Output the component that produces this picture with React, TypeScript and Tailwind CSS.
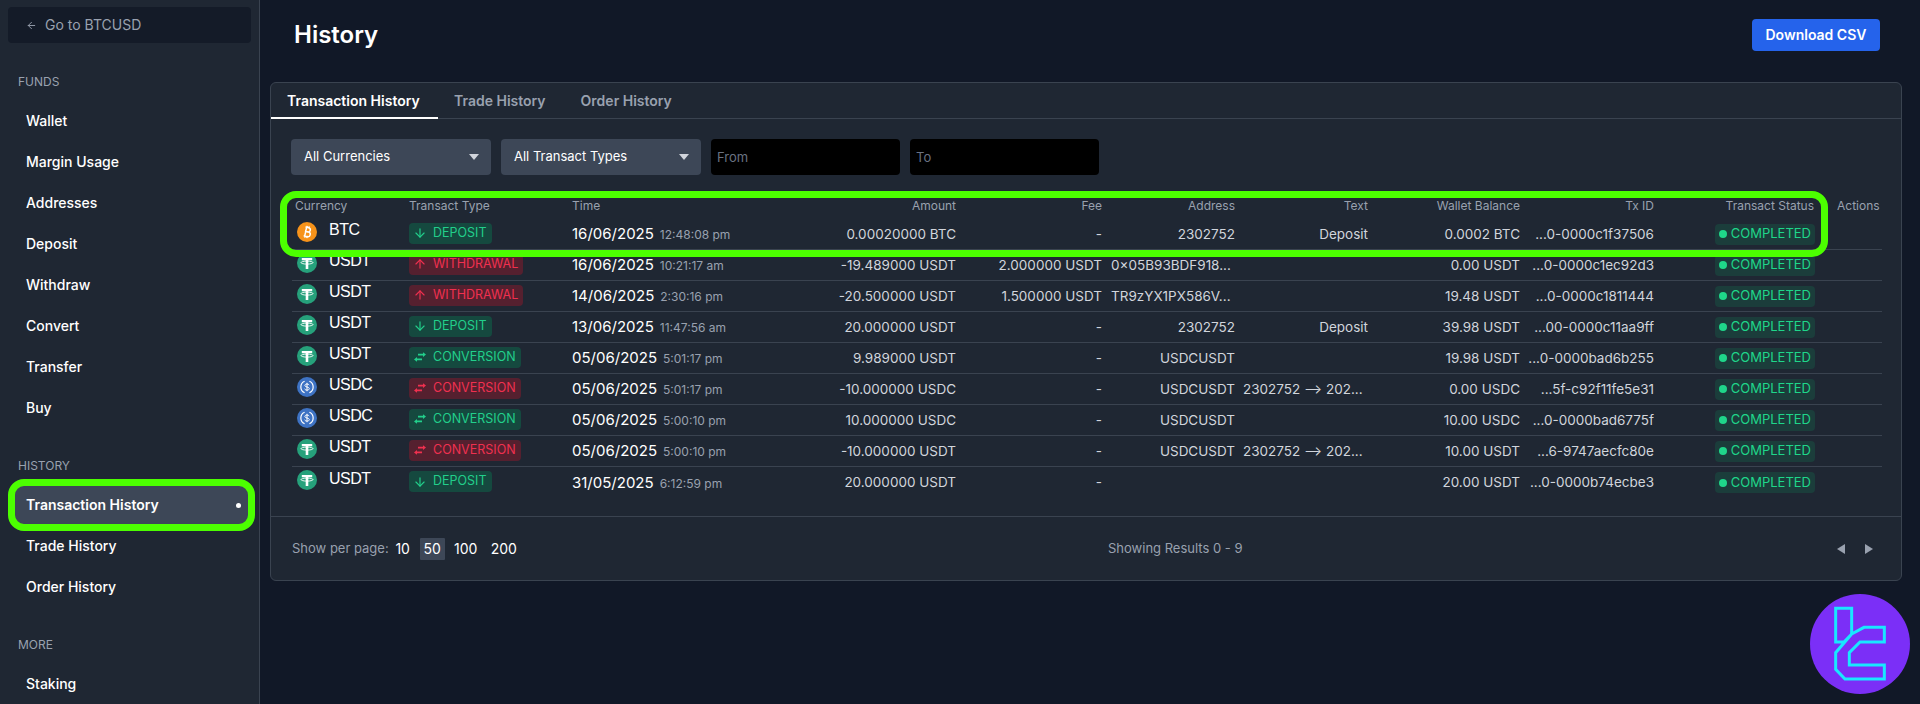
import { ArrowDown, ArrowLeft, ArrowUp } from 'lucide-react';

type Kind = 'DEPOSIT' | 'WITHDRAWAL' | 'CONVERSION';
type Coin = 'BTC' | 'USDT' | 'USDC';

type Row = {
  coin: Coin;
  kind: Kind;
  good: boolean;
  date: string;
  time: string;
  amount: string;
  fee: string;
  address: string;
  text: string;
  balance: string;
  txId: string;
};

const rows: Row[] = [
  { coin: 'BTC', kind: 'DEPOSIT', good: true, date: '16/06/2025', time: '12:48:08 pm', amount: '0.00020000 BTC', fee: '-', address: '2302752', text: 'Deposit', balance: '0.0002 BTC', txId: '...0-0000c1f37506' },
  { coin: 'USDT', kind: 'WITHDRAWAL', good: false, date: '16/06/2025', time: '10:21:17 am', amount: '-19.489000 USDT', fee: '2.000000 USDT', address: '0×05B93BDF918...', text: '', balance: '0.00 USDT', txId: '...0-0000c1ec92d3' },
  { coin: 'USDT', kind: 'WITHDRAWAL', good: false, date: '14/06/2025', time: '2:30:16 pm', amount: '-20.500000 USDT', fee: '1.500000 USDT', address: 'TR9zYX1PX586V...', text: '', balance: '19.48 USDT', txId: '...0-0000c1811444' },
  { coin: 'USDT', kind: 'DEPOSIT', good: true, date: '13/06/2025', time: '11:47:56 am', amount: '20.000000 USDT', fee: '-', address: '2302752', text: 'Deposit', balance: '39.98 USDT', txId: '...00-0000c11aa9ff' },
  { coin: 'USDT', kind: 'CONVERSION', good: true, date: '05/06/2025', time: '5:01:17 pm', amount: '9.989000 USDT', fee: '-', address: 'USDCUSDT', text: '', balance: '19.98 USDT', txId: '...0-0000bad6b255' },
  { coin: 'USDC', kind: 'CONVERSION', good: false, date: '05/06/2025', time: '5:01:17 pm', amount: '-10.000000 USDC', fee: '-', address: 'USDCUSDT', text: '2302752 ⟶ 202...', balance: '0.00 USDC', txId: '...5f-c92f11fe5e31' },
  { coin: 'USDC', kind: 'CONVERSION', good: true, date: '05/06/2025', time: '5:00:10 pm', amount: '10.000000 USDC', fee: '-', address: 'USDCUSDT', text: '', balance: '10.00 USDC', txId: '...0-0000bad6775f' },
  { coin: 'USDT', kind: 'CONVERSION', good: false, date: '05/06/2025', time: '5:00:10 pm', amount: '-10.000000 USDT', fee: '-', address: 'USDCUSDT', text: '2302752 ⟶ 202...', balance: '10.00 USDT', txId: '...6-9747aecfc80e' },
  { coin: 'USDT', kind: 'DEPOSIT', good: true, date: '31/05/2025', time: '6:12:59 pm', amount: '20.000000 USDT', fee: '-', address: '', text: '', balance: '20.00 USDT', txId: '...0-0000b74ecbe3' },
];

const sidebar = [
  { title: 'FUNDS', items: ['Wallet', 'Margin Usage', 'Addresses', 'Deposit', 'Withdraw', 'Convert', 'Transfer', 'Buy'] },
  { title: 'HISTORY', items: ['Transaction History', 'Trade History', 'Order History'] },
  { title: 'MORE', items: ['Staking'] },
];

function CoinIcon({ coin }: { coin: Coin }) {
  if (coin === 'BTC') {
    return (
      <svg viewBox="0 0 20 20" className="w-5 h-5 shrink-0">
        <circle cx="10" cy="10" r="10" fill="#f7931a" />
        <g transform="rotate(12 10 10)" fill="none" stroke="#fff" strokeWidth="1.5">
          <path d="M7.5 5.5h3.2a2 2 0 0 1 0 4.3H7.8m0 0h3.6a2.2 2.2 0 0 1 0 4.6H7.5M8.6 5.5v9M9 4v1.5M11 4v1.5M9 14.4V16M11 14.4V16" />
        </g>
      </svg>
    );
  }
  if (coin === 'USDT') {
    return (
      <svg viewBox="0 0 20 20" className="w-5 h-5 shrink-0">
        <circle cx="10" cy="10" r="10" fill="#26a17b" />
        <path d="M4.8 5h10.4v2.3h-3.9v8.6H8.7V7.3H4.8z" fill="#fff" />
        <ellipse cx="10" cy="9.6" rx="6" ry="1.5" fill="none" stroke="#fff" strokeWidth="0.9" />
      </svg>
    );
  }
  return (
    <svg viewBox="0 0 20 20" className="w-5 h-5 shrink-0">
      <circle cx="10" cy="10" r="10" fill="#3e73c4" />
      <path d="M7.6 4.3a6.2 6.2 0 0 0 0 11.4M12.4 4.3a6.2 6.2 0 0 1 0 11.4" fill="none" stroke="#fff" strokeWidth="1.2" />
      <path d="M12.2 8.2c-.3-.8-1.1-1.2-2.2-1.2-1.2 0-2.1.6-2.1 1.5 0 2.1 4.4 1 4.4 3.1 0 .9-1 1.5-2.3 1.5-1.2 0-2.1-.5-2.3-1.4M10 5.8v8.4" fill="none" stroke="#fff" strokeWidth="1" />
    </svg>
  );
}

function SwapIcon() {
  return (
    <svg viewBox="0 0 14 14" className="w-[14px] h-[14px]" fill="currentColor">
      <path d="M5 3.8h5V2.2L13 4.6 10 7V5.4H5z" />
      <path d="M9 8.6H4V7l-3 2.4L4 11.8v-1.6h5z" />
    </svg>
  );
}

function TypePill({ kind, good }: { kind: Kind; good: boolean }) {
  const color = good ? 'bg-[#15493f] text-[#22cf8b]' : 'bg-[#55202f] text-[#f0304f]';
  return (
    <span className={`inline-flex items-center gap-[6px] h-[21px] pl-1 pr-[5px] rounded text-[12.5px] ${color}`}>
      {kind === 'DEPOSIT' && <ArrowDown className="w-[14px] h-[14px]" />}
      {kind === 'WITHDRAWAL' && <ArrowUp className="w-[14px] h-[14px]" />}
      {kind === 'CONVERSION' && <SwapIcon />}
      {kind}
    </span>
  );
}

function Sidebar() {
  return (
    <aside className="w-[260px] shrink-0 h-[704px] overflow-hidden bg-[#1f2733] border-r border-[#3a4350] pt-[7px]">
      <div className="mx-2 w-[243px] h-9 flex items-center gap-2 pl-[18px] rounded bg-[#141b28] text-sm text-gray-400">
        <ArrowLeft className="w-[11px] h-[11px]" />
        Go to BTCUSD
      </div>
      {sidebar.map((group) => (
        <div key={group.title} className="mt-[31px]">
          <div className="pl-[18px] h-[16px] leading-[16px] text-xs text-gray-400">{group.title}</div>
          <div className="mt-3 flex flex-col gap-[3px]">
            {group.items.map((item) => {
              const active = item === 'Transaction History';
              return (
                <div
                  key={item}
                  className={`relative mx-[15px] w-[233px] h-[38px] flex items-center justify-between pl-[11px] pr-[7px] rounded text-sm text-white ${
                    active ? 'bg-[#3d4757] font-semibold' : 'font-medium'
                  }`}
                >
                  {item}
                  {active && (
                    <>
                      <span className="w-[5px] h-[5px] rounded-full bg-white" />
                      <span className="absolute -inset-[7px] border-[7px] border-[#4cff00] rounded-[16px]" />
                    </>
                  )}
                </div>
              );
            })}
          </div>
        </div>
      ))}
    </aside>
  );
}

const gridCols = 'grid grid-cols-[115px_163px_210px_178px_146px_133px_133px_152px_134px_160px_66px]';

function Select({ label }: { label: string }) {
  return (
    <div className="w-[200px] h-9 flex items-center justify-between pl-[13px] pr-3 rounded bg-[#3d4757] text-[13px] text-white">
      {label}
      <span className="w-0 h-0 border-x-[5px] border-x-transparent border-t-[6px] border-t-gray-300" />
    </div>
  );
}

function DateInput({ placeholder }: { placeholder: string }) {
  return (
    <input
      placeholder={placeholder}
      className="w-[189px] h-9 px-[6px] rounded-sm bg-black text-[13px] text-white placeholder:text-gray-500 outline-none"
    />
  );
}

export default function App() {
  return (
    <div className="relative w-[1920px] h-[704px] overflow-hidden flex bg-[#111827] font-['Inter',sans-serif]">
      <Sidebar />
      <main className="flex-1 pl-[10px] pr-[18px]">
        <div className="h-[82px] flex items-start justify-between pl-6 pr-[22px]">
          <h1 className="mt-[19px] text-2xl font-semibold text-white">History</h1>
          <button className="mt-[19px] w-[128px] h-8 rounded bg-[#2563eb] text-sm font-semibold text-white">
            Download CSV
          </button>
        </div>

        <section className="h-[499px] rounded-md border border-[#3a4350] bg-[#1f2733] flex flex-col">
          <div className="h-[36px] flex border-b border-[#3a4350] text-sm font-semibold">
            <div className="w-[167px] h-[36px] pl-4 pt-2 border-b-2 border-white text-white">Transaction History</div>
            <div className="ml-4 pt-2 text-gray-400">Trade History</div>
            <div className="ml-[35px] pt-2 text-gray-400">Order History</div>
          </div>

          <div className="mt-5 pl-5 flex gap-[10px]">
            <Select label="All Currencies" />
            <Select label="All Transact Types" />
            <DateInput placeholder="From" />
            <DateInput placeholder="To" />
          </div>

          <div className="mt-[21px] ml-[21px] w-[1590px]">
            <div className={`${gridCols} h-[23px] pt-[2px] items-start text-xs text-gray-400`}>
              <div className="pl-[3px]">Currency</div>
              <div className="pl-[2px]">Transact Type</div>
              <div className="pl-[2px]">Time</div>
              <div className="pr-[2px] text-right">Amount</div>
              <div className="pr-[2px] text-right">Fee</div>
              <div className="pr-[2px] text-right">Address</div>
              <div className="pr-[2px] text-right">Text</div>
              <div className="pr-[2px] text-right">Wallet Balance</div>
              <div className="pr-[2px] text-right">Tx ID</div>
              <div className="pr-[2px] text-right">Transact Status</div>
              <div className="pl-[21px]">Actions</div>
            </div>
            {rows.map((row, i) => (
              <div
                key={i}
                className={`${gridCols} h-[31px] items-center text-[13.5px] text-gray-300 ${
                  i < rows.length - 1 ? 'border-b border-[#3a4350]' : ''
                }`}
              >
                <div className="flex items-center gap-3 pl-[5px] -mt-[5px] text-base tracking-[-0.5px] text-white font-['Liberation_Sans',sans-serif]">
                  <CoinIcon coin={row.coin} />
                  <span className="-mt-[3px]">{row.coin}</span>
                </div>
                <div className="pl-[2px]">
                  <TypePill kind={row.kind} good={row.good} />
                </div>
                <div className="pl-[2px] flex items-baseline gap-[6px] text-xs text-gray-400">
                  <span className="text-[15px] text-white">{row.date}</span>
                  {row.time}
                </div>
                <div className="pr-[2px] text-right">{row.amount}</div>
                <div className="pr-[2px] text-right">{row.fee}</div>
                <div className={row.address.endsWith('...') ? 'pl-[7px] whitespace-nowrap' : 'pr-[2px] text-right'}>{row.address}</div>
                <div className={row.text.endsWith('...') ? 'pl-[6px] whitespace-nowrap' : 'pr-[2px] text-right'}>{row.text}</div>
                <div className="pr-[2px] text-right">{row.balance}</div>
                <div className="pr-[2px] text-right whitespace-nowrap">{row.txId}</div>
                <div className="flex justify-end pr-[1px]">
                  <span className="inline-flex items-center gap-[4px] h-[21px] px-1 rounded bg-[#1b3d3b] text-[13px] text-[#1fd68a]">
                    <span className="w-2 h-2 rounded-full bg-[#1fd68a]" />
                    COMPLETED
                  </span>
                </div>
                <div />
              </div>
            ))}
          </div>

          <div className="mt-[18px] flex-1 border-t border-[#3a4350] pl-[21px] pr-[28px] flex items-center text-[13px] text-gray-400">
            <div className="flex items-center gap-[2px] w-[400px]">
              Show per page:
              <div className="flex items-center text-sm text-white">
                <span className="w-[24px] text-center">10</span>
                <span className="ml-[5px] w-[25px] h-[22px] flex items-center justify-center rounded-[1px] bg-[#3d4757]">50</span>
                <span className="ml-[9px] w-[24px] text-center">100</span>
                <span className="ml-[13px] w-[24px] text-center">200</span>
              </div>
            </div>
            <div className="ml-[416px]">Showing Results 0 - 9</div>
            <div className="ml-auto flex gap-5">
              <span className="w-0 h-0 border-y-[5px] border-y-transparent border-r-[8px] border-r-gray-400" />
              <span className="w-0 h-0 border-y-[5px] border-y-transparent border-l-[8px] border-l-gray-400" />
            </div>
          </div>
        </section>
      </main>

      {/* callout over the table header and first row */}
      <div className="absolute left-[280px] top-[191px] w-[1548px] h-[66px] border-[7px] border-[#4cff00] rounded-[16px]" />

      {/* watermark logo */}
      <svg viewBox="120 72 300 300" className="absolute left-[1810px] top-[594px] w-[100px] h-[100px]">
        <circle cx="270" cy="222" r="150" fill="#7b2ff7" />
        <path
          d="M197 115H245V192L222 216H197ZM245 192L282 172H343V216H270L238 248V285H343V327H225L197 298V248L245 192"
          fill="none"
          stroke="#18e8ff"
          strokeWidth="9"
        />
      </svg>
    </div>
  );
}
